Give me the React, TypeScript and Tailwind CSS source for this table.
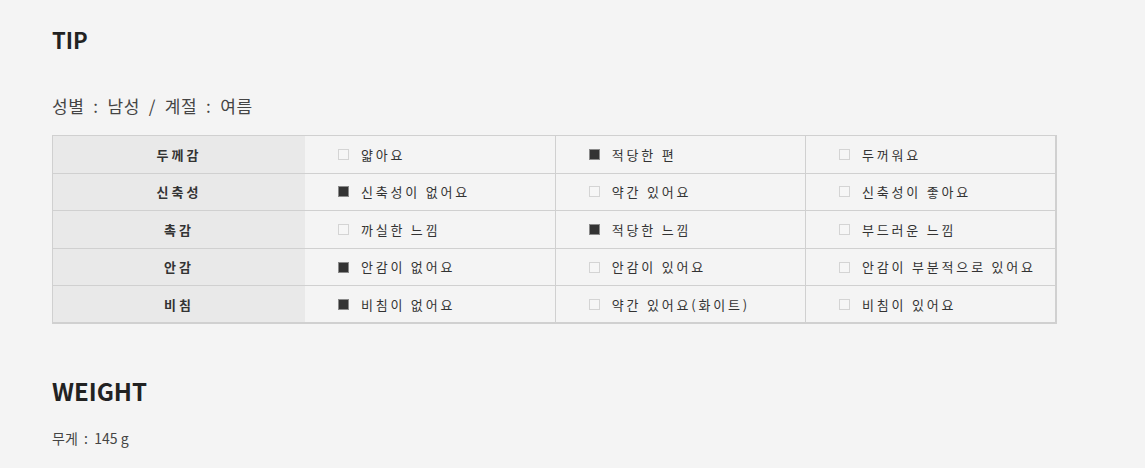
const rows: { label: string; opts: [string, boolean][] }[] = [
  { label: "두께감", opts: [["얇아요", false], ["적당한 편", true], ["두꺼워요", false]] },
  { label: "신축성", opts: [["신축성이 없어요", true], ["약간 있어요", false], ["신축성이 좋아요", false]] },
  { label: "촉감", opts: [["까실한 느낌", false], ["적당한 느낌", true], ["부드러운 느낌", false]] },
  { label: "안감", opts: [["안감이 없어요", true], ["안감이 있어요", false], ["안감이 부분적으로 있어요", false]] },
  { label: "비침", opts: [["비침이 없어요", true], ["약간 있어요(화이트)", false], ["비침이 있어요", false]] },
];

function Box({ on }: { on: boolean }) {
  return on ? (
    <span className="inline-block size-[11px] shrink-0 border border-[#8a8a8a] bg-[#333]" />
  ) : (
    <span className="inline-block size-[11px] shrink-0 border border-[#d4d4d4] bg-[#f6f6f6]" />
  );
}

export default function App() {
  return (
    <div
      className="min-h-[468px] bg-[#f4f4f4] pl-[52px] pt-[24px] text-[#333]"
      style={{ fontFamily: '"Noto Sans CJK KR", "Noto Sans", sans-serif' }}
    >
      <h2 className="text-[22px] font-bold leading-[30px] text-[#222]">TIP</h2>
      <p className="mt-[40px] text-[17px] leading-[24px] tracking-[0.6px] text-[#444]">
        성별&nbsp; :&nbsp; 남성&nbsp; /&nbsp; 계절&nbsp; :&nbsp; 여름
      </p>

      <table className="mt-[17px] w-[1005px] border-collapse border-r-2 border-b-2 border-[#d0d0d0] text-[13px]">
        <tbody>
          {rows.map((r) => (
            <tr key={r.label} className="h-[37.6px]">
              <th className="w-[252px] border border-r-0 border-[#d0d0d0] bg-[#e9e9e9] text-center font-bold tracking-[3px] text-[#333]">
                {r.label}
              </th>
              {r.opts.map(([t, on], i) => (
                <td
                  key={i}
                  className={
                    i === 0
                      ? "w-[250px] border border-l-0 border-[#d0d0d0] pl-[33px]"
                      : "w-[250px] border border-[#d0d0d0] pl-[33px]"
                  }
                >
                  <div className="flex items-center gap-[12px] tracking-[2.8px] text-[#333]">
                    <Box on={on} />
                    <span>{t}</span>
                  </div>
                </td>
              ))}
            </tr>
          ))}
        </tbody>
      </table>

      <h2 className="mt-[50px] text-[24px] font-bold leading-[34px] text-[#222]">WEIGHT</h2>
      <p className="mt-[20px] text-[14px] leading-[20px] text-[#444]">무게&nbsp; :&nbsp; 145 g</p>
    </div>
  );
}
